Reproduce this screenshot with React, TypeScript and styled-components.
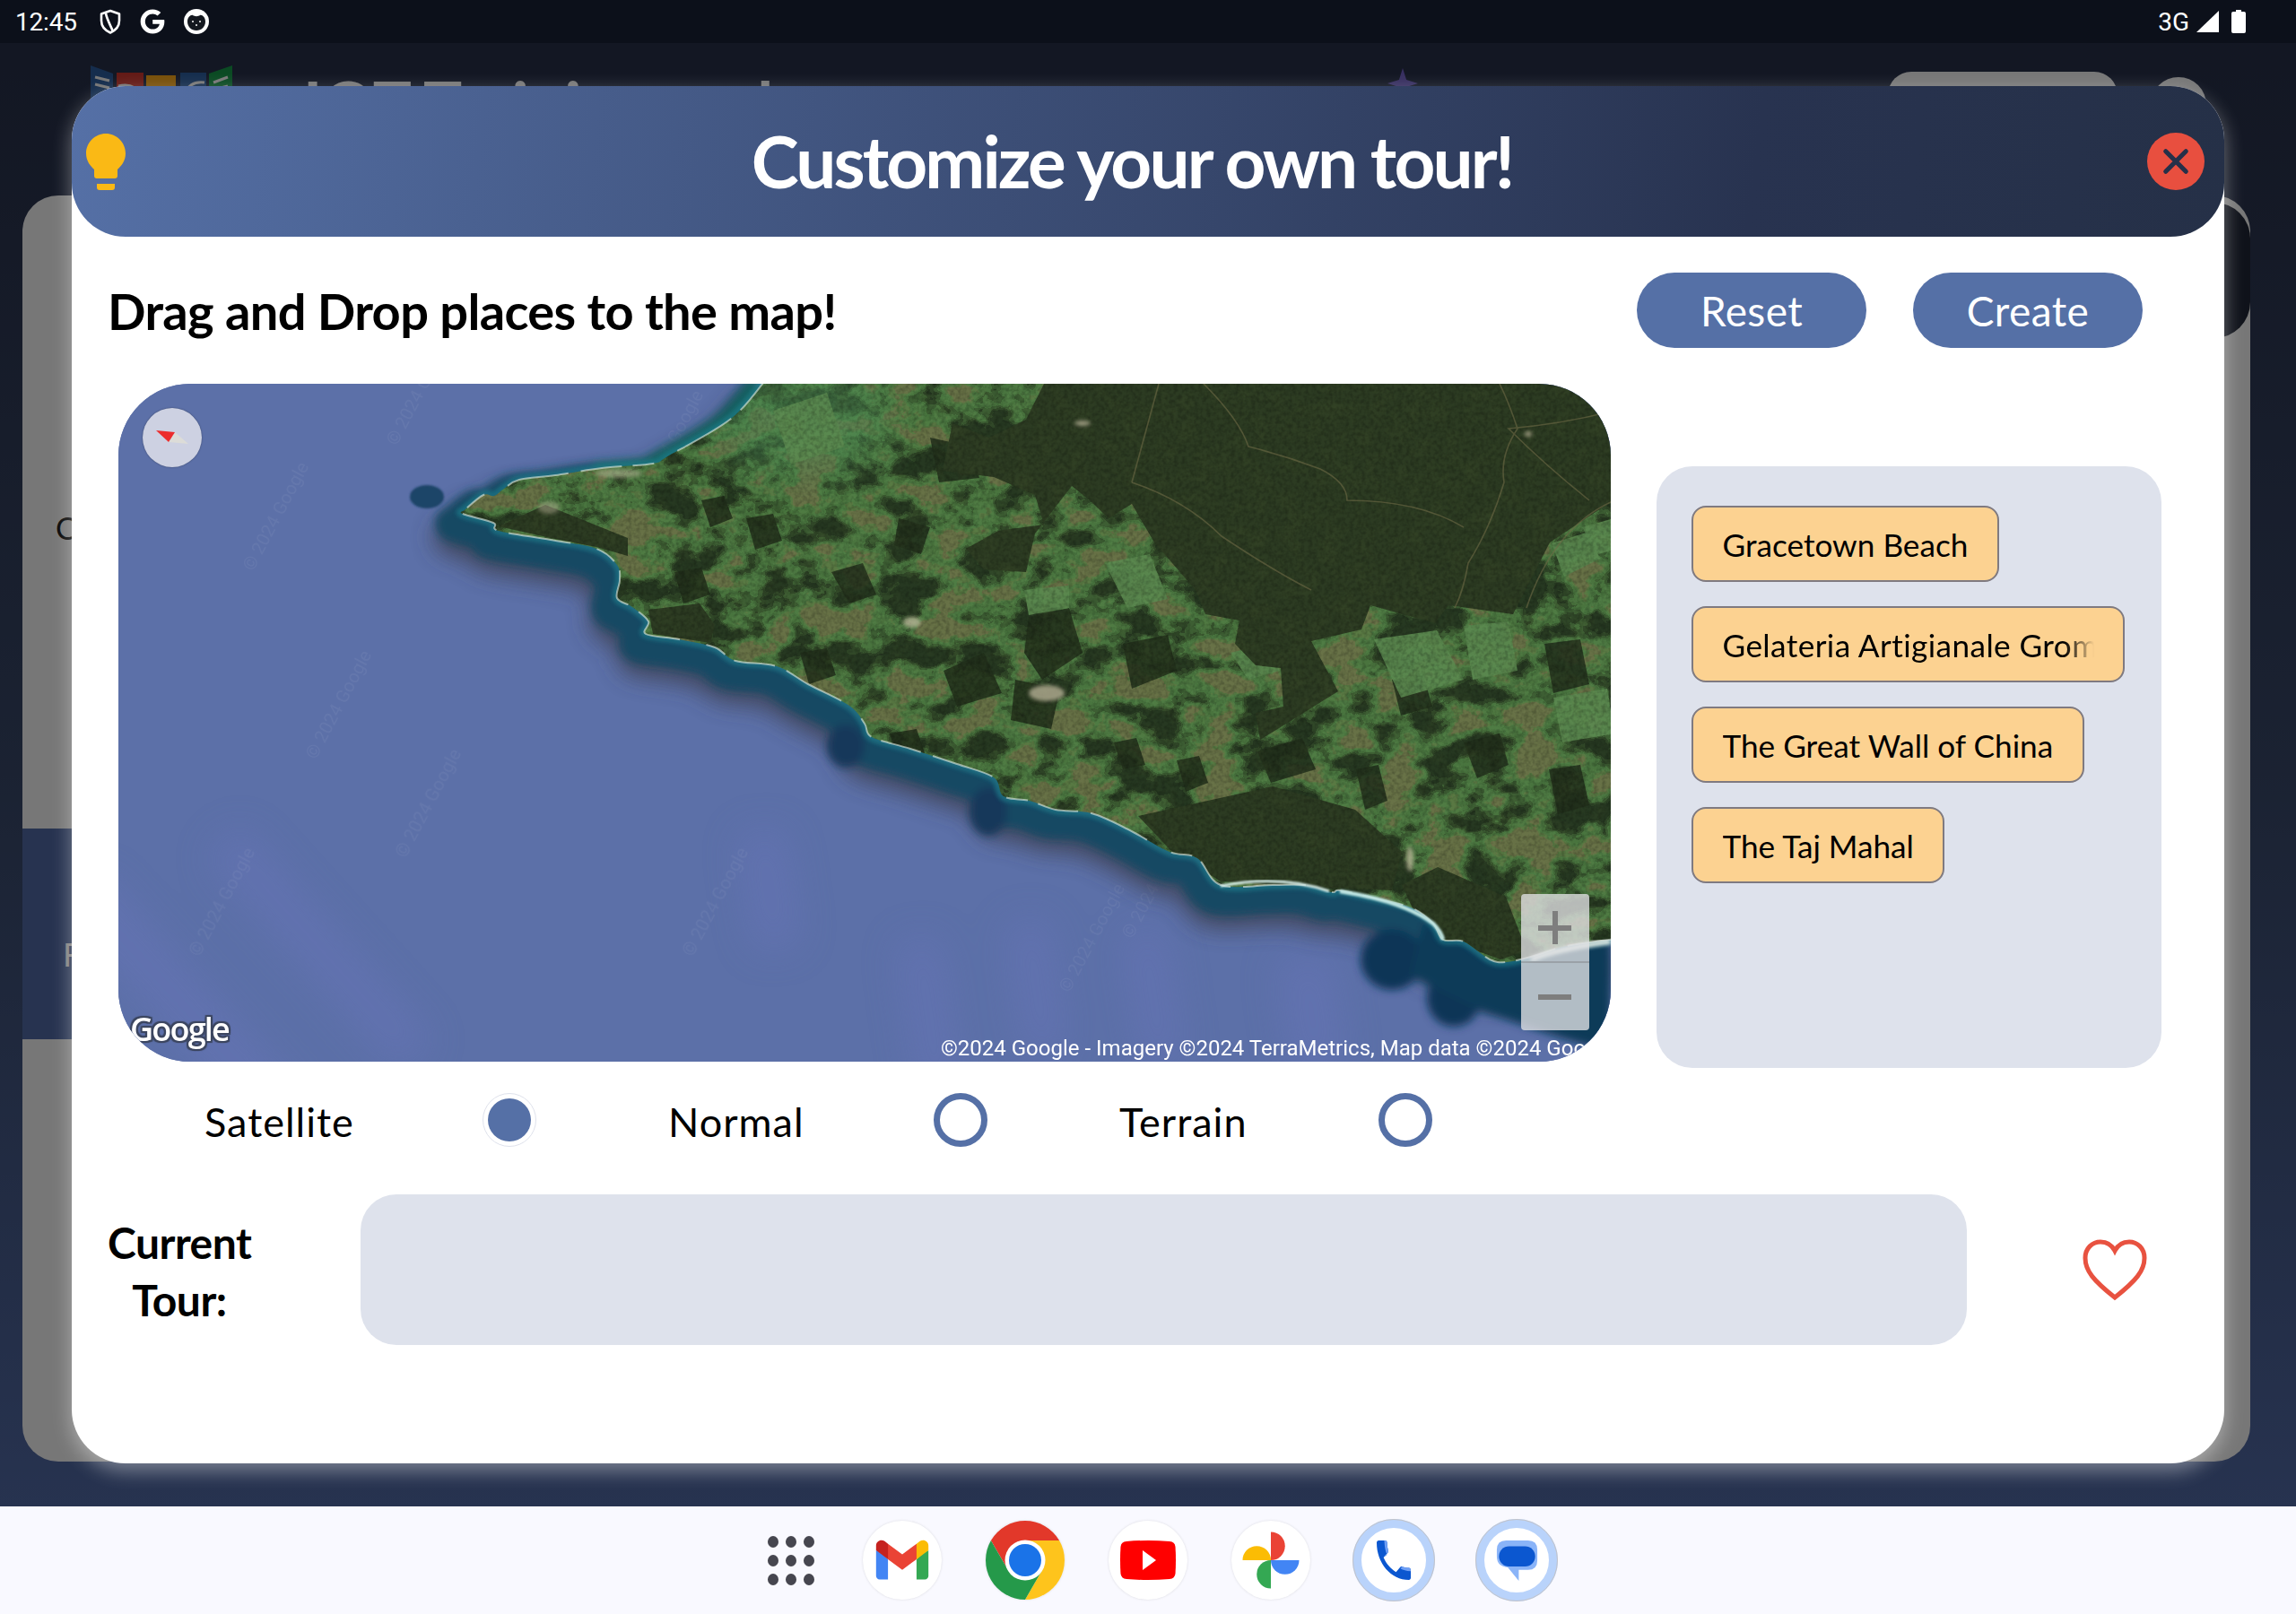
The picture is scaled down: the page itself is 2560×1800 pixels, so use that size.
import React from 'react';
import styled, { createGlobalStyle } from 'styled-components';
import { FaGoogle } from 'react-icons/fa';

const GlobalStyle = createGlobalStyle`
  html, body { margin: 0; padding: 0; background: #f9f9ff; }
  * { box-sizing: border-box; }
`;

const Screen = styled.div`
  width: 2560px;
  height: 1800px;
  display: flex;
  flex-direction: column;
  overflow: hidden;
  font-family: "Lato", "Liberation Sans", sans-serif;
`;

/* ---------- status bar ---------- */
const StatusBar = styled.div`
  height: 48px;
  flex: none;
  background: #0c101a;
  color: #fff;
  display: flex;
  align-items: center;
  justify-content: space-between;
  padding: 0 56px 0 17px;
  font-family: "Roboto", sans-serif;
  font-size: 28px;
`;
const StatusGroup = styled.div<{ $gap: number }>`
  display: flex;
  align-items: center;
  gap: ${(p) => p.$gap}px;
`;
const Clock = styled.span`
  margin-right: 4px;
  letter-spacing: -0.2px;
`;
const BatterySlot = styled.span`
  margin-left: 6px;
  display: flex;
`;

/* ---------- app behind the dialog ---------- */
const Stage = styled.div`
  position: relative;
  flex: 1;
  background: linear-gradient(180deg, #262e46 0%, #364565 50%, #4e66a0 100%);
  padding: 24px 51px 50px 25px;
  display: flex;
  flex-direction: column;
`;
const TopBar = styled.div`
  display: flex;
  align-items: flex-start;
  height: 146px;
  padding-left: 75px;
`;
const AppTitle = styled.div`
  margin: 8px 0 0 78px;
  font-size: 72px;
  line-height: 72px;
  font-weight: 700;
  color: #eee;
  width: 1209px;
  white-space: nowrap;
`;
const Star = styled.div`
  width: 34px;
  height: 34px;
  margin-top: 4px;
  background: #6f5fc0;
  clip-path: polygon(50% 0, 62% 38%, 100% 50%, 62% 62%, 50% 100%, 38% 62%, 0 50%, 38% 38%);
`;
const TopButton = styled.div`
  width: 256px;
  height: 90px;
  margin: 8px 0 0 524px;
  background: #eee;
  border-radius: 26px;
`;
const TopCircle = styled.div`
  width: 62px;
  height: 62px;
  margin: 14px 0 0 37px;
  background: #eee;
  border-radius: 50%;
`;
const Card = styled.div`
  position: relative;
  flex: 1;
  background: #eee;
  border-radius: 40px;
  padding-top: 350px;
  display: flex;
  flex-direction: column;
`;
const CardLabel = styled.div`
  padding-left: 37px;
  font-size: 34px;
  line-height: 42px;
  color: #111;
`;
const CardBand = styled.div`
  margin-top: 314px;
  margin-right: 300px;
  height: 235px;
  background: #4e66a0;
  color: #fff;
  font-size: 36px;
  padding: 118px 0 0 45px;
`;
const CardCorner = styled.div`
  position: absolute;
  top: 8px;
  right: 0;
  width: 300px;
  height: 151px;
  border-radius: 40px;
  background: #1f2534;
`;
const Scrim = styled.div`
  position: absolute;
  inset: 0;
  background: rgba(0, 0, 0, 0.5);
`;

/* ---------- dialog ---------- */
const Modal = styled.div`
  position: absolute;
  left: 80px;
  top: 48px;
  width: 2400px;
  height: 1536px;
  background: #fff;
  border-radius: 60px;
  box-shadow: 0 8px 22px rgba(255, 255, 255, 0.4);
  display: flex;
  flex-direction: column;
`;
const Header = styled.div`
  height: 168px;
  flex: none;
  border-radius: 60px;
  background: linear-gradient(97deg, #5570a6 0%, #283350 78%, #253047 100%);
  display: flex;
  align-items: center;
  justify-content: space-between;
  padding: 0 22px 0 16px;
`;
const Title = styled.h1`
  margin: -3px 0 0 -10px;
  font-size: 80px;
  font-weight: 700;
  letter-spacing: -2.9px;
  color: #fff;
`;
const CloseButton = styled.button`
  width: 64px;
  height: 64px;
  border: none;
  padding: 0;
  border-radius: 50%;
  background: #e84f3f;
  display: flex;
  align-items: center;
  justify-content: center;
`;
const Toolbar = styled.div`
  margin-top: 40px;
  padding: 0 91px 0 40px;
  height: 84px;
  display: flex;
  align-items: center;
  gap: 52px;
`;
const Heading = styled.h2`
  margin: 0 auto 0 0;
  font-size: 56px;
  font-weight: 700;
  letter-spacing: -0.65px;
  color: #000;
`;
const PillButton = styled.button`
  width: 256px;
  height: 84px;
  border: none;
  border-radius: 42px;
  background: #5570a6;
  color: #fff;
  font-family: inherit;
  font-size: 46px;
  letter-spacing: 0.4px;
  padding: 0;
`;
const MainRow = styled.div`
  margin-top: 40px;
  padding-left: 52px;
  display: flex;
  align-items: flex-start;
  gap: 51px;
`;
const MapFrame = styled.div`
  position: relative;
  width: 1664px;
  height: 756px;
  border-radius: 80px;
  overflow: hidden;
  flex: none;
  background: #5c70a8;
  svg { display: block; }
`;
const Compass = styled.div`
  position: absolute;
  left: 27px;
  top: 27px;
  width: 66px;
  height: 66px;
  border-radius: 50%;
  background: #cdd1e2;
  box-shadow: 0 0 2px rgba(0, 0, 0, 0.4);
`;
const ZoomBox = styled.div`
  position: absolute;
  left: 1564px;
  top: 569px;
  width: 76px;
  height: 152px;
  border-radius: 4px;
  background: rgba(225, 225, 228, 0.78);
  display: flex;
  flex-direction: column;
`;
const ZoomPart = styled.div<{ $divider?: boolean }>`
  flex: 1;
  position: relative;
  border-bottom: ${(p) => (p.$divider ? '2px solid rgba(120, 120, 120, 0.4)' : 'none')};
`;
const ZoomBar = styled.span<{ $vertical?: boolean }>`
  position: absolute;
  left: ${(p) => (p.$vertical ? 35 : 19)}px;
  top: ${(p) => (p.$vertical ? 19 : 35)}px;
  width: ${(p) => (p.$vertical ? 6 : 37)}px;
  height: ${(p) => (p.$vertical ? 37 : 6)}px;
  background: #7e7e7e;
`;
const GoogleMark = styled.span`
  position: absolute;
  left: 13px;
  top: 698px;
  font-family: "Open Sans", sans-serif;
  font-size: 36px;
  line-height: 44px;
  font-weight: 600;
  letter-spacing: -1.8px;
  color: #fff;
  text-shadow: 2px 0 0 #3c4660, -2px 0 0 #3c4660, 0 2px 0 #3c4660, 0 -2px 0 #3c4660,
    2px 2px 1px #3c4660, -2px 2px 1px #3c4660, 2px -2px 1px #3c4660, -2px -2px 1px #3c4660;
`;
const Attribution = styled.span`
  position: absolute;
  left: 917px;
  top: 726px;
  font-family: "Roboto", sans-serif;
  font-size: 24px;
  line-height: 30px;
  color: #fff;
  white-space: nowrap;
`;
const PlacesPanel = styled.div`
  margin-top: 92px;
  width: 563px;
  height: 671px;
  border-radius: 40px;
  background: #dee2ec;
  padding: 44px 0 0 39px;
  display: flex;
  flex-direction: column;
  align-items: flex-start;
  gap: 27px;
`;
const Chip = styled.div<{ $wide?: boolean }>`
  height: 85px;
  width: ${(p) => (p.$wide ? '483px' : 'auto')};
  padding: 0 32.5px;
  display: flex;
  align-items: center;
  background: #fcd291;
  border: 2.5px solid #7f7a80;
  border-radius: 16px;
  font-size: 35.2px;
  color: #000;
`;
const ChipText = styled.span<{ $fade?: boolean }>`
  white-space: nowrap;
  overflow: hidden;
  ${(p) =>
    p.$fade
      ? `letter-spacing: 0.4px;
         -webkit-mask-image: linear-gradient(90deg, #000 92%, transparent 100%);
         mask-image: linear-gradient(90deg, #000 92%, transparent 100%);`
      : ''}
`;
const RadioRow = styled.div`
  margin-top: 28px;
  padding-left: 148px;
  display: flex;
  align-items: center;
  height: 60px;
`;
const RadioLabel = styled.span<{ $width: number }>`
  width: ${(p) => p.$width}px;
  font-size: 45px;
  letter-spacing: 1px;
  color: #000;
  padding-top: 4px;
`;
const Radio = styled.span<{ $on?: boolean }>`
  width: 60px;
  height: 60px;
  border-radius: 50%;
  margin-right: 147px;
  flex: none;
  border: ${(p) => (p.$on ? '1px solid #dfe2ec' : '7px solid #5570a6')};
  display: flex;
  align-items: center;
  justify-content: center;
  &::after {
    content: '';
    display: ${(p) => (p.$on ? 'block' : 'none')};
    width: 48px;
    height: 48px;
    border-radius: 50%;
    background: #5570a6;
  }
`;
const TourRow = styled.div`
  margin-top: 53px;
  padding-left: 40px;
  display: flex;
  align-items: center;
`;
const TourLabel = styled.div`
  width: 160px;
  margin-right: 122px;
  padding-top: 4px;
  text-align: center;
  font-size: 48px;
  line-height: 64px;
  font-weight: 700;
  letter-spacing: -0.5px;
  color: #000;
`;
const TourBox = styled.div`
  width: 1791px;
  height: 168px;
  border-radius: 40px;
  background: #dee2ec;
  margin-right: 127px;
`;

/* ---------- launcher bar ---------- */
const Dock = styled.div`
  height: 120px;
  flex: none;
  background: #f9f9ff;
  display: flex;
  align-items: center;
  justify-content: center;
  gap: 49px;
  padding-left: 13px;
`;
const AppGrid = styled.div`
  width: 88px;
  margin-right: -13px;
  padding: 0 18px;
  display: grid;
  grid-template-columns: repeat(3, 12px);
  gap: 8px;
  span {
    width: 12px;
    height: 13px;
    border-radius: 50%;
    background: #46464f;
  }
`;
const DockIcon = styled.div`
  width: 88px;
  height: 88px;
  border-radius: 50%;
  background: #fff;
  box-shadow: 0 0 3px rgba(0, 0, 0, 0.12);
  flex: none;
  svg { display: block; }
`;
const DockRing = styled.div`
  width: 92px;
  height: 92px;
  margin: 0 -2px;
  border-radius: 50%;
  background: #fff;
  border: 10px solid #b9d3fb;
  outline: 1px solid #c4c4c8;
  outline-offset: -1px;
  flex: none;
  display: flex;
  align-items: center;
  justify-content: center;
`;

/* ---------- map drawing ---------- */
type Pt = [number, number];

const coast: Pt[] = [
  [723, -6], [683, 39], [614, 80], [596, 89], [539, 94], [487, 102], [447, 107], [430, 117], [419, 125],
  [407, 124], [387, 140], [384, 145], [418, 155], [424, 164], [482, 174], [533, 184], [556, 202], [559, 219],
  [556, 239], [573, 249], [591, 265], [588, 279], [625, 285], [665, 294], [688, 309], [734, 315], [769, 335],
  [815, 359], [832, 379], [840, 394], [883, 407], [935, 424], [976, 439], [987, 460], [1016, 465], [1045, 475],
  [1085, 479], [1126, 497], [1172, 522], [1203, 529], [1229, 559], [1287, 559], [1322, 559], [1353, 567],
  [1362, 565], [1402, 574], [1443, 585], [1466, 602], [1477, 620], [1500, 622], [1529, 642], [1547, 645],
  [1575, 639], [1615, 627], [1670, 619],
];

const smooth = (pts: Pt[]) => {
  let d = `M${pts[0][0]} ${pts[0][1]}`;
  for (let i = 0; i < pts.length - 1; i++) {
    const p0 = pts[Math.max(i - 1, 0)];
    const p1 = pts[i];
    const p2 = pts[i + 1];
    const p3 = pts[Math.min(i + 2, pts.length - 1)];
    const c1x = p1[0] + (p2[0] - p0[0]) / 6;
    const c1y = p1[1] + (p2[1] - p0[1]) / 6;
    const c2x = p2[0] - (p3[0] - p1[0]) / 6;
    const c2y = p2[1] - (p3[1] - p1[1]) / 6;
    d += ` C${c1x.toFixed(1)} ${c1y.toFixed(1)} ${c2x.toFixed(1)} ${c2y.toFixed(1)} ${p2[0]} ${p2[1]}`;
  }
  return d;
};

const coastPath = smooth(coast);
const landPath = `${coastPath} L1670 -6 Z`;
const northCoast = smooth(coast.slice(0, 5));

const forests: string[] = [
  '1032,0 1012,40 971,60 930,44 919,97 976,104 1022,124 1032,157 981,164 945,184 965,207 1012,210 1022,167 1063,114 1083,130 1104,150 1130,134 1155,177 1201,230 1212,257 1250,264 1245,290 1268,314 1296,317 1299,360 1268,367 1273,397 1360,343 1330,287 1386,274 1396,247 1468,267 1483,247 1555,257 1596,177 1668,129 1668,0',
  '1137,482 1287,449 1379,475 1431,522 1420,565 1345,562 1229,555 1172,519',
  '1431,559 1471,539 1547,572 1570,632 1541,642 1477,619 1443,585',
  '424,159 476,135 568,172 568,192 533,182 482,172',
  '591,252 648,245 665,269 660,289 596,279',
];

const darkFields: string[] = [
  '905,60 950,70 960,105 915,110', '870,150 905,160 895,190 865,180', '920,320 965,300 985,345 935,360',
  '1015,260 1060,250 1075,300 1030,330 1010,300', '1120,290 1170,280 1180,320 1130,340', '1000,330 1050,340 1040,385 995,375',
  '795,210 830,200 845,235 815,245', '700,150 730,145 740,175 710,185', '760,300 790,295 800,325 770,335',
  '650,130 675,125 685,150 660,160', '1270,410 1320,395 1335,430 1285,445', '1500,400 1540,390 1550,425 1515,440',
  '1420,330 1455,325 1465,360 1430,370', '1590,290 1630,285 1640,335 1600,345', '620,210 650,205 660,235 630,245',
  '1180,420 1205,415 1215,445 1190,455', '1595,430 1630,425 1640,470 1605,480', '1380,430 1405,425 1415,465 1390,475',
  '860,390 890,385 900,415 870,425', '1110,400 1135,395 1145,425 1120,430',
];

const brightFields: string[] = [
  '1598,178 1640,165 1652,195 1612,215', '1632,160 1668,150 1668,185 1650,190', '1240,300 1280,290 1295,320 1260,330',
  '1100,200 1150,190 1170,240 1125,250', '1400,285 1470,275 1500,330 1430,350', '1500,270 1550,265 1560,320 1510,330',
  '1600,350 1660,340 1668,390 1610,400', '730,30 790,10 810,70 750,90', '1010,230 1060,225 1060,250 1015,258',
];

const watermarks: [number, number][] = [
  [150, 210], [220, 420], [320, 530], [590, 130], [640, 640], [1060, 680], [1130, 620], [90, 640], [310, 70],
];

const SatelliteMap = () => (
  <svg width={1664} height={756} viewBox="0 0 1664 756">
    <defs>
      <filter id="farm" x="0" y="0" width="100%" height="100%" colorInterpolationFilters="sRGB">
        <feTurbulence type="fractalNoise" baseFrequency="0.02 0.028" numOctaves="4" seed="11" />
        <feColorMatrix type="matrix" values="2.8 0 0 0 -0.9 2.8 0 0 0 -0.9 2.8 0 0 0 -0.9 0 0 0 0 1" />
        <feComponentTransfer>
          <feFuncR type="discrete" tableValues=".15 .19 .24 .29 .31 .35 .41" />
          <feFuncG type="discrete" tableValues=".22 .28 .37 .46 .49 .48 .45" />
          <feFuncB type="discrete" tableValues=".13 .16 .2 .25 .27 .27 .28" />
        </feComponentTransfer>
        <feComposite in2="SourceGraphic" operator="in" />
      </filter>
      <filter id="grain" x="0" y="0" width="100%" height="100%" colorInterpolationFilters="sRGB">
        <feTurbulence type="fractalNoise" baseFrequency="0.22" numOctaves="2" seed="4" />
        <feColorMatrix type="matrix" values="0 0 0 0 0 0 0 0 0 0 0 0 0 0 0 2.4 0 0 0 -0.9" />
      </filter>
      <filter id="mottle" x="0" y="0" width="100%" height="100%" colorInterpolationFilters="sRGB">
        <feTurbulence type="fractalNoise" baseFrequency="0.05" numOctaves="3" seed="21" />
        <feColorMatrix type="matrix" values="0 0 0 0 0.35 0 0 0 0 0.42 0 0 0 0 0.22 2.2 0 0 0 -0.95" />
      </filter>
      <filter id="b1"><feGaussianBlur stdDeviation="1" /></filter>
      <filter id="b2"><feGaussianBlur stdDeviation="2" /></filter>
      <filter id="b5" x="-10%" y="-10%" width="120%" height="120%"><feGaussianBlur stdDeviation="5" /></filter>
      <filter id="b12" x="-20%" y="-20%" width="140%" height="140%"><feGaussianBlur stdDeviation="13" /></filter>
      <filter id="b30" x="-50%" y="-50%" width="200%" height="200%"><feGaussianBlur stdDeviation="22" /></filter>
      <clipPath id="landClip"><path d={landPath} /></clipPath>
    </defs>

    <rect width="1664" height="756" fill="#5c70a8" />
    {/* lighter bands in the water */}
    <g filter="url(#b30)" fill="#6a76bb" opacity="0.45">
      <rect x="40" y="520" width="60" height="340" transform="rotate(-42 70 690)" />
      <rect x="200" y="470" width="50" height="320" transform="rotate(-42 225 630)" />
      <rect x="880" y="620" width="46" height="170" transform="rotate(-8 900 700)" />
      <rect x="1000" y="600" width="46" height="150" transform="rotate(-8 1020 670)" />
      <rect x="1130" y="610" width="46" height="150" transform="rotate(-8 1150 680)" />
      <rect x="1300" y="640" width="60" height="130" transform="rotate(-8 1320 700)" />
      <rect x="700" y="500" width="50" height="130" transform="rotate(-8 720 560)" />
    </g>
    {watermarks.map(([x, y], i) => (
      <text key={i} x={x} y={y} transform={`rotate(-62 ${x} ${y})`} fill="#fff" opacity="0.05" fontFamily="Roboto, sans-serif" fontSize="20">
        © 2024 Google
      </text>
    ))}

    {/* shadow, then the shallow water along the coast */}
    <path d={coastPath} transform="translate(-12 28)" fill="none" stroke="#3a3c4c" strokeWidth="36" filter="url(#b12)" opacity="0.8" />
    <g filter="url(#b5)">
      <path d={coastPath} transform="translate(-9 13)" fill="none" stroke="#174863" strokeWidth="38" strokeLinejoin="round" />
      <path d={northCoast} transform="translate(-7 7)" fill="none" stroke="#126060" strokeWidth="28" />
      <ellipse cx="811" cy="404" rx="21" ry="24" fill="#14385a" />
      <ellipse cx="970" cy="477" rx="21" ry="27" fill="#14385a" />
      <ellipse cx="1420" cy="642" rx="35" ry="34" fill="#0f3556" />
      <ellipse cx="1489" cy="685" rx="30" ry="32" fill="#0f3556" />
      <polygon points="1455,600 1530,640 1664,615 1664,745 1610,730 1520,700 1440,660" fill="#0f3a58" />
    </g>
    <ellipse cx="344" cy="126" rx="19" ry="13" fill="#1d4468" filter="url(#b1)" />
    <path d={coastPath} fill="none" stroke="#1f7f8d" strokeWidth="10" filter="url(#b2)" opacity="0.6" />

    {/* land */}
    <path d={landPath} fill="#3f5630" filter="url(#farm)" />
    <g clipPath="url(#landClip)">
      <ellipse cx="760" cy="40" rx="100" ry="60" fill="#4f9058" opacity="0.55" filter="url(#b30)" />
      <g fill="#212e1b" opacity="0.85">
        {darkFields.map((p) => <polygon key={p} points={p} />)}
      </g>
      <g fill="#5b8a50" opacity="0.9">
        {brightFields.map((p) => <polygon key={p} points={p} />)}
      </g>
      <g fill="#2c3b22">
        {forests.map((p) => <polygon key={p} points={p} />)}
      </g>
      <rect width="1664" height="756" filter="url(#mottle)" opacity="0.14" />
      <rect width="1664" height="756" filter="url(#grain)" opacity="0.2" />
      <g fill="none" stroke="#6e6a46" strokeWidth="1.6" opacity="0.6">
        <path d="M1160 0 L1130 110" />
        <path d="M1210 0 Q1250 40 1260 70 Q1300 80 1340 95 Q1370 110 1370 130 Q1450 130 1500 160" />
        <path d="M1130 110 Q1190 130 1230 170 Q1290 210 1330 230" />
        <path d="M1540 0 Q1550 20 1560 50 Q1540 80 1545 110 Q1530 160 1505 200 Q1500 230 1490 250" />
        <path d="M1668 30 Q1610 45 1550 50 Q1590 90 1640 130" />
        <path d="M1668 130 Q1600 160 1570 250" />
      </g>
      <g fill="#bfb99d" filter="url(#b2)" opacity="0.75">
        <ellipse cx="1035" cy="345" rx="20" ry="9" />
        <ellipse cx="885" cy="266" rx="10" ry="6" />
        <ellipse cx="558" cy="100" rx="26" ry="5" opacity="0.7" />
        <ellipse cx="1572" cy="56" rx="4" ry="3" />
        <ellipse cx="1440" cy="530" rx="4" ry="14" />
        <ellipse cx="1075" cy="44" rx="9" ry="3" />
        <ellipse cx="480" cy="138" rx="12" ry="7" opacity="0.6" />
      </g>
    </g>

    {/* surf */}
    <path d={coastPath} fill="none" stroke="#e2ece4" strokeWidth="2" strokeDasharray="46 14 70 30 24 12" opacity="0.6" />
    <path d="M1362 566 C1400 572 1440 582 1466 602 C1474 610 1476 616 1477 620" fill="none" stroke="#bfe5e2" strokeWidth="4.5" filter="url(#b1)" />
    <path d="M1575 642 C1600 632 1635 626 1664 622" fill="none" stroke="#e8efe8" strokeWidth="6" filter="url(#b2)" />
    <path d="M1229 560 C1270 552 1310 552 1350 566" fill="none" stroke="#d5ece8" strokeWidth="3" filter="url(#b1)" />
  </svg>
);

const CompassNeedle = () => (
  <svg width={66} height={66} viewBox="0 0 66 66">
    <polygon points="36,27 51,40 29,38" fill="#dcdcd8" />
    <polygon points="15,25 36,27 29,38" fill="#ec2c2c" />
  </svg>
);

/* ---------- icons ---------- */
const ShieldIcon = () => (
  <svg width={24} height={28} viewBox="0 0 24 28" fill="none" stroke="#fff" strokeWidth="2.6" strokeLinejoin="round">
    <path d="M12 2 L22 5.5 V13 C22 19.5 17.5 24 12 26.5 C6.5 24 2 19.5 2 13 V5.5 Z" />
    <path d="M7 5 C8 11 12 18 15 25" />
  </svg>
);
const BadgeIcon = () => (
  <svg width={28} height={28} viewBox="0 0 28 28">
    <circle cx="14" cy="14" r="14" fill="#fff" />
    <path d="M4 14 C4 9 8 6 10 7 C12 8.500 16 8.500 18 7 C20 6 24 9 24 14 C24 20 19.500 24 14 24 C8.500 24 4 20 4 14 Z" fill="#14181f" />
    <circle cx="10" cy="14" r="1" fill="#fff" />
    <circle cx="14" cy="18" r="1" fill="#fff" />
    <circle cx="18" cy="14" r="1" fill="#fff" />
  </svg>
);
const SignalIcon = () => (
  <svg width={25} height={24} viewBox="0 0 25 24"><polygon points="25,0 25,24 0,24" fill="#fff" /></svg>
);
const BatteryIcon = () => (
  <svg width={16} height={26} viewBox="0 0 16 26">
    <path d="M5 0 H11 V2 H14 Q16 2 16 4 V24 Q16 26 14 26 H2 Q0 26 0 24 V4 Q0 2 2 2 H5 Z" fill="#fff" />
  </svg>
);
const BulbIcon = () => (
  <svg width={44} height={63} viewBox="0 0 44 63" fill="#fab915">
    <path d="M22 0 C34 0 44 10 44 22 C44 31 39 36 35 40 V47 Q35 50 32 50 H12 Q9 50 9 47 V40 C5 36 0 31 0 22 C0 10 10 0 22 0 Z" />
    <path d="M12 56 H32 V60 Q32 63 29 63 H15 Q12 63 12 60 Z" />
  </svg>
);
const CloseIcon = () => (
  <svg width={30} height={30} viewBox="0 0 32 32" stroke="#263049" strokeWidth="5.500" strokeLinecap="round">
    <path d="M4 4 L28 28 M28 4 L4 28" />
  </svg>
);
const HeartIcon = () => (
  <svg width={76} height={70} viewBox="0 0 76 70" fill="none" stroke="#e85240" strokeWidth="5" strokeLinejoin="miter">
    <path d="M38 66 C14 47 5 36 5 22 C5 11 13 4 22 4 C29 4 35 8 38 14 C41 8 47 4 54 4 C63 4 71 11 71 22 C71 36 62 47 38 66 Z" />
  </svg>
);
const LogoIcon = () => (
  <svg width={160} height={90} viewBox="0 0 160 90" fill="none">
    <path d="M1 1 L26 10 V90 H1 Z" fill="#2b5a9a" />
    <path d="M30 9 H60 V90 H30 Z" fill="#c6352c" />
    <path d="M63 12 H96 V90 H63 Z" fill="#ee9f12" />
    <path d="M101 9 H130 V90 H101 Z" fill="#2b5a9a" />
    <path d="M159 1 L133 10 V90 H159 Z" fill="#169547" />
    <path d="M6 14 L22 18 M6 22 L22 26" stroke="#eee" strokeWidth="3" />
    <path d="M138 20 L154 14 M138 28 L154 24" stroke="#eee" strokeWidth="3" />
    <path d="M32 24 Q50 20 56 34" stroke="#eee" strokeWidth="3" />
    <path d="M106 32 Q112 18 128 20" stroke="#eee" strokeWidth="3" />
  </svg>
);
const GmailIcon = () => (
  <svg width={88} height={88} viewBox="-65 -95 386 386">
    <path d="M58.18 192.05V93.14L27.5 65.08 0 49.5v125.09c0 9.66 7.83 17.46 17.45 17.46h40.73z" fill="#4285f4" />
    <path d="M197.82 192.05h40.73c9.65 0 17.45-7.83 17.45-17.45V49.5l-31.16 17.84-27.02 25.8v98.91z" fill="#34a853" />
    <path d="M58.18 93.14l-4.17-38.65 4.17-36.99L128 69.87l69.82-52.37 4.67 35-4.67 40.64L128 145.5z" fill="#ea4335" />
    <path d="M197.82 17.5v75.64L256 49.5V26.23c0-21.58-24.64-33.88-41.89-20.94l-16.29 12.21z" fill="#fbbc04" />
    <path d="M0 49.5l26.76 20.07L58.18 93.14V17.5L41.89 5.29C24.61-7.65 0 4.65 0 26.23V49.5z" fill="#c5221f" />
  </svg>
);
const ChromeIcon = () => (
  <svg width={88} height={88} viewBox="0 0 88 88">
    <path d="M82.1 22 A44 44 0 0 0 5.9 22 L24.95 55 L44 44 L44 22 Z" fill="#e2382a" />
    <path d="M44 88 A44 44 0 0 0 82.1 22 L44 22 L44 44 L63.05 55 Z" fill="#fec41c" />
    <path d="M5.9 22 A44 44 0 0 0 44 88 L63.05 55 L44 44 L24.95 55 Z" fill="#25994a" />
    <circle cx="44" cy="44" r="22.500" fill="#fff" />
    <circle cx="44" cy="44" r="18" fill="#1a73e8" />
  </svg>
);
const YoutubeIcon = () => (
  <svg width={88} height={88} viewBox="0 0 88 88">
    <path d="M20 23 Q44 21 68 23 Q74 23.500 74.500 29 Q75.500 44 74.500 59 Q74 64.500 68 65 Q44 67 20 65 Q14 64.500 13.500 59 Q12.500 44 13.500 29 Q14 23.500 20 23 Z" fill="#f00" />
    <polygon points="38,33 38,55 53,44" fill="#fff" />
  </svg>
);
const PhotosIcon = () => (
  <svg width={88} height={88} viewBox="0 0 88 88">
    <path d="M44 44 H12.500 A15.750 15.750 0 0 1 44 44 Z" fill="#fbbc04" />
    <path d="M44 44 V12.500 A15.750 15.750 0 0 1 44 44 Z" fill="#ea4335" />
    <path d="M44 44 H75.500 A15.750 15.750 0 0 1 44 44 Z" fill="#4285f4" />
    <path d="M44 44 V75.500 A15.750 15.750 0 0 1 44 44 Z" fill="#34a853" />
  </svg>
);
const PhoneIcon = () => (
  <svg width={38} height={44} viewBox="3 3 18 18" preserveAspectRatio="none">
    <path fill="#0b57d0" d="M6.62 10.79c1.44 2.83 3.76 5.14 6.59 6.59l2.2-2.2c.27-.27.67-.36 1.02-.24 1.12.37 2.33.57 3.57.57.55 0 1 .45 1 1V20c0 .55-.45 1-1 1-9.39 0-17-7.61-17-17 0-.55.45-1 1-1h3.5c.55 0 1 .45 1 1 0 1.25.2 2.45.57 3.57.11.35.03.74-.25 1.02l-2.2 2.2z" />
    <path fill="#6f9ff5" d="M6.62 10.79l2.2-2.2c.28-.28.36-.67.25-1.02C8.700 6.450 8.500 5.250 8.500 4c0-.55-.45-1-1-1H7c.2 3 .6 5 1.500 6.500l-1.880 1.290zM16.430 14.940c1.120.37 2.330.57 3.570.57.550 0 1 .45 1 1v.5c-2.500 0-4-.5-5.500-1.200l.93-.870z" />
  </svg>
);
const MessagesIcon = () => (
  <svg width={47} height={47} viewBox="0 0 50 50">
    <path d="M12 1 H38 Q49 1 49 12 V25 Q49 36 38 36 H27 V49 L14 33 Q1 32 1 20 V12 Q1 1 12 1 Z" fill="#8ab4f8" />
    <rect x="3.500" y="8" width="43" height="24" rx="12" fill="#0b57d0" />
  </svg>
);

const places = [
  { name: 'Gracetown Beach' },
  { name: 'Gelateria Artigianale Grom', fade: true },
  { name: 'The Great Wall of China' },
  { name: 'The Taj Mahal' },
];

const mapTypes = [
  { name: 'Satellite', width: 310, on: true },
  { name: 'Normal', width: 296 },
  { name: 'Terrain', width: 289 },
];

export default function App() {
  return (
    <Screen>
      <GlobalStyle />
      <StatusBar>
        <StatusGroup $gap={21}>
          <Clock>12:45</Clock>
          <ShieldIcon />
          <FaGoogle size={28} color="#fff" />
          <BadgeIcon />
        </StatusGroup>
        <StatusGroup $gap={8}>
          <span>3G</span>
          <SignalIcon />
          <BatterySlot><BatteryIcon /></BatterySlot>
        </StatusGroup>
      </StatusBar>

      <Stage>
        <TopBar>
          <LogoIcon />
          <AppTitle>IOT Training and</AppTitle>
          <Star />
          <TopButton />
          <TopCircle />
        </TopBar>
        <Card>
          <CardCorner />
          <CardLabel>Category</CardLabel>
          <CardBand>Filter</CardBand>
        </Card>
        <Scrim />

        <Modal>
          <Header>
            <BulbIcon />
            <Title>Customize your own tour!</Title>
            <CloseButton><CloseIcon /></CloseButton>
          </Header>

          <Toolbar>
            <Heading>Drag and Drop places to the map!</Heading>
            <PillButton>Reset</PillButton>
            <PillButton>Create</PillButton>
          </Toolbar>

          <MainRow>
            <MapFrame>
              <SatelliteMap />
              <Compass><CompassNeedle /></Compass>
              <ZoomBox>
                <ZoomPart $divider><ZoomBar /><ZoomBar $vertical /></ZoomPart>
                <ZoomPart><ZoomBar /></ZoomPart>
              </ZoomBox>
              <GoogleMark>Google</GoogleMark>
              <Attribution>©2024 Google - Imagery ©2024 TerraMetrics, Map data ©2024 Goo</Attribution>
            </MapFrame>
            <PlacesPanel>
              {places.map((p) => (
                <Chip key={p.name} $wide={p.fade}>
                  <ChipText $fade={p.fade}>{p.name}</ChipText>
                </Chip>
              ))}
            </PlacesPanel>
          </MainRow>

          <RadioRow>
            {mapTypes.map((m) => (
              <React.Fragment key={m.name}>
                <RadioLabel $width={m.width}>{m.name}</RadioLabel>
                <Radio $on={m.on} />
              </React.Fragment>
            ))}
          </RadioRow>

          <TourRow>
            <TourLabel>Current Tour:</TourLabel>
            <TourBox />
            <HeartIcon />
          </TourRow>
        </Modal>
      </Stage>

      <Dock>
        <AppGrid>
          {Array.from({ length: 9 }).map((_, i) => <span key={i} />)}
        </AppGrid>
        <DockIcon><GmailIcon /></DockIcon>
        <DockIcon><ChromeIcon /></DockIcon>
        <DockIcon><YoutubeIcon /></DockIcon>
        <DockIcon><PhotosIcon /></DockIcon>
        <DockRing><PhoneIcon /></DockRing>
        <DockRing><MessagesIcon /></DockRing>
      </Dock>
    </Screen>
  );
}
